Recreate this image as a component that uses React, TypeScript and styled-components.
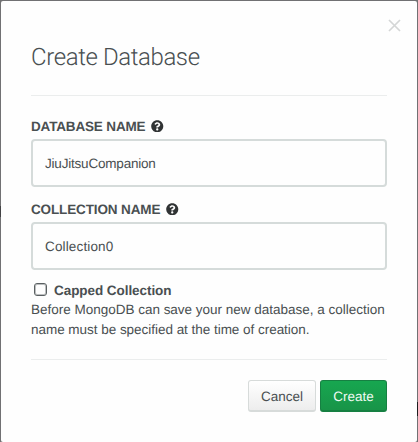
import React, { useState } from 'react';
import styled, { createGlobalStyle } from 'styled-components';
import { FaQuestionCircle } from 'react-icons/fa';

const GlobalStyle = createGlobalStyle`
  *, *::before, *::after { box-sizing: border-box; }
  body {
    margin: 0;
    overflow: hidden;
    font-family: "Liberation Sans", Arial, sans-serif;
    font-size: 13.5px;
    color: #494f51;
    text-rendering: geometricPrecision;
  }
  input, button { text-rendering: inherit; }
`;

const Backdrop = styled.div`
  width: 418px;
  height: 442px;
  padding: 1px 1px 0;
  background:
    linear-gradient(#434345, #434345) 0 206px / 1px 11px no-repeat,
    linear-gradient(#1d1e20, #1d1e20) 417px 402px / 1px 14px no-repeat,
    #717173;
`;

const Dialog = styled.form`
  display: flex;
  flex-direction: column;
  height: 441px;
  padding: 12px 30px 0;
  background: #fefefe;
  border-radius: 2px;
`;

const CloseButton = styled.button`
  display: flex;
  align-self: flex-end;
  margin: 6px -14px 0 0;
  padding: 0;
  border: 0;
  background: none;
  color: #d4d6d6;
`;

const Title = styled.h1`
  height: 64px;
  margin: 0;
  padding-top: 9px;
  border-bottom: 1px solid #ebeded;
  font: 300 24px/32px Roboto, sans-serif;
  letter-spacing: -0.4px;
`;

const Field = styled.div<{ $first?: boolean }>`
  margin-top: ${({ $first }) => ($first ? 20 : 12)}px;
`;

const FieldLabel = styled.label<{ $tracking: number }>`
  display: flex;
  align-items: center;
  height: 20px;
  font-weight: 700;
  letter-spacing: ${({ $tracking }) => $tracking}px;
  text-transform: uppercase;
  white-space: nowrap;
`;

const HelpIcon = styled(FaQuestionCircle)`
  width: 12.5px;
  height: 12.5px;
  margin-left: 6px;
  color: #303334;
`;

const TextInput = styled.input<{ $tracking: number }>`
  display: block;
  width: 100%;
  height: 48px;
  margin-top: 3px;
  padding: 0 12px;
  border: 2px solid #d5dbda;
  border-radius: 4px;
  outline: 0;
  background: #fefefe;
  color: inherit;
  font: 13.5px "Liberation Sans", Arial, sans-serif;
  letter-spacing: ${({ $tracking }) => $tracking}px;
`;

const CheckRow = styled.label`
  display: flex;
  align-items: center;
  height: 20px;
  margin: 10px 0 0 3px;
  gap: 7px;
  font-weight: 700;
  letter-spacing: -0.06px;
`;

const Checkbox = styled.input`
  appearance: none;
  width: 13px;
  height: 13px;
  margin: -2px 0 0;
  border: 1.5px solid #5a6062;
  outline: 0.5px solid #5a606266;
  outline-offset: -2px;
  border-radius: 3px;
  background: #fefefe;

  &:checked { background: #5a6062; }
`;

const HelpText = styled.p`
  height: 60px;
  margin: 0;
  border-bottom: 1px solid #ebeded;
  line-height: 20px;
  white-space: nowrap;
`;

const HelpLine = styled.span<{ $tracking: number }>`
  display: block;
  letter-spacing: ${({ $tracking }) => $tracking}px;
`;

const Actions = styled.div`
  display: flex;
  justify-content: flex-end;
  gap: 4px;
  margin-top: 20px;
`;

const Button = styled.button<{ $primary?: boolean }>`
  width: ${({ $primary }) => ($primary ? 67 : 68)}px;
  height: 32px;
  padding: 1px 0 0;
  border: 1px solid ${({ $primary }) => ($primary ? '#168042' : '#d7dbda')};
  border-bottom-width: 2px;
  border-radius: 3px;
  background: ${({ $primary }) =>
    $primary ? 'linear-gradient(#17a750, #189448)' : 'linear-gradient(#fff, #ededed)'};
  color: ${({ $primary }) => ($primary ? '#effaf3' : '#494f51')};
  font: 13.5px "Liberation Sans", Arial, sans-serif;
`;

export default function App() {
  const [database, setDatabase] = useState('JiuJitsuCompanion');
  const [collection, setCollection] = useState('Collection0');

  return (
    <>
      <GlobalStyle />
      <Backdrop>
        <Dialog onSubmit={(e: React.FormEvent) => e.preventDefault()}>
          <CloseButton type="button" aria-label="Close">
            <svg width="13" height="13" viewBox="0 0 13 13" fill="none" stroke="currentColor" strokeWidth="1.7">
              <path d="M1 1 12 12M12 1 1 12" />
            </svg>
          </CloseButton>
          <Title>Create Database</Title>
          <Field $first>
            <FieldLabel htmlFor="database" $tracking={-0.16}>
              Database Name <HelpIcon />
            </FieldLabel>
            <TextInput
              id="database"
              $tracking={-0.2}
              value={database}
              onChange={(e) => setDatabase(e.target.value)}
            />
          </Field>
          <Field>
            <FieldLabel htmlFor="collection" $tracking={-0.13}>
              Collection Name <HelpIcon />
            </FieldLabel>
            <TextInput
              id="collection"
              $tracking={0.15}
              value={collection}
              onChange={(e) => setCollection(e.target.value)}
            />
          </Field>
          <CheckRow>
            <Checkbox type="checkbox" />
            Capped Collection
          </CheckRow>
          <HelpText>
            <HelpLine $tracking={-0.01}>Before MongoDB can save your new database, a collection</HelpLine>
            <HelpLine $tracking={-0.03}>name must be specified at the time of creation.</HelpLine>
          </HelpText>
          <Actions>
            <Button type="button">Cancel</Button>
            <Button type="submit" $primary>Create</Button>
          </Actions>
        </Dialog>
      </Backdrop>
    </>
  );
}
